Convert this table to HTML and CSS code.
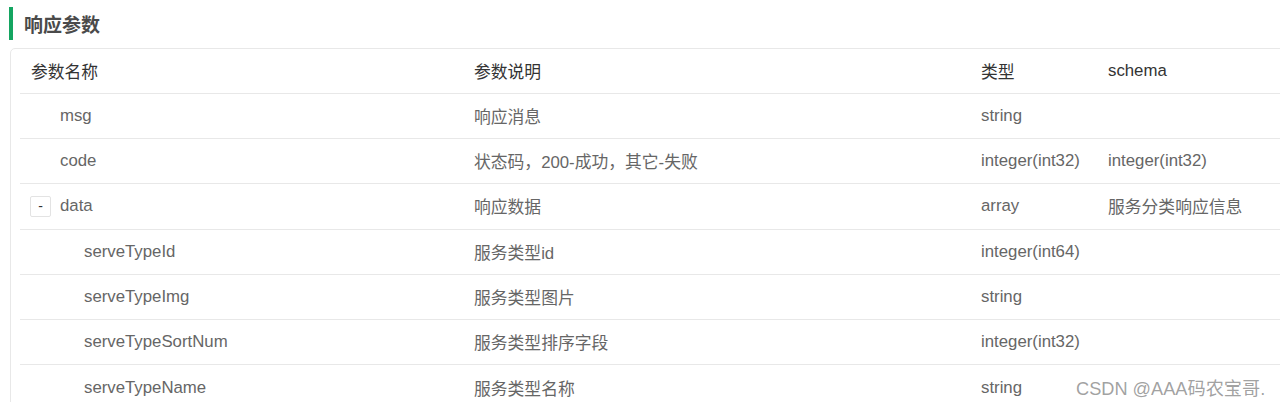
FILE: index.html
```html
<!DOCTYPE html>
<html lang="zh">
<head>
<meta charset="utf-8">
<title>响应参数</title>
<link rel="stylesheet" href="styles.css">
</head>
<body>
<div class="page">
  <h3 class="title">响应参数</h3>
  <div class="card">
    <div class="row head">
      <div class="cell">参数名称</div>
      <div class="cell">参数说明</div>
      <div class="cell">类型</div>
      <div class="cell">schema</div>
    </div>
    <div class="row">
      <div class="cell lvl1">msg</div>
      <div class="cell">响应消息</div>
      <div class="cell">string</div>
      <div class="cell"></div>
    </div>
    <div class="row">
      <div class="cell lvl1">code</div>
      <div class="cell">状态码，200-成功，其它-失败</div>
      <div class="cell">integer(int32)</div>
      <div class="cell">integer(int32)</div>
    </div>
    <div class="row">
      <div class="cell toggle-cell"><span class="toggle">-</span>data</div>
      <div class="cell">响应数据</div>
      <div class="cell">array</div>
      <div class="cell">服务分类响应信息</div>
    </div>
    <div class="row">
      <div class="cell lvl2">serveTypeId</div>
      <div class="cell">服务类型id</div>
      <div class="cell">integer(int64)</div>
      <div class="cell"></div>
    </div>
    <div class="row">
      <div class="cell lvl2">serveTypeImg</div>
      <div class="cell">服务类型图片</div>
      <div class="cell">string</div>
      <div class="cell"></div>
    </div>
    <div class="row">
      <div class="cell lvl2">serveTypeSortNum</div>
      <div class="cell">服务类型排序字段</div>
      <div class="cell">integer(int32)</div>
      <div class="cell"></div>
    </div>
    <div class="row">
      <div class="cell lvl2">serveTypeName</div>
      <div class="cell">服务类型名称</div>
      <div class="cell">string</div>
      <div class="cell"></div>
    </div>
  </div>
  <div class="watermark">CSDN @AAA码农宝哥.</div>
</div>
</body>
</html>
```

FILE: styles.css
```css
html, body {
  margin: 0;
  padding: 0;
  background: #fff;
  overflow: hidden;
}
.page {
  position: relative;
  width: 1280px;
  height: 402px;
  padding: 7px 0 0 9px;
  box-sizing: border-box;
  font-family: "Liberation Sans", "Noto Sans CJK SC", sans-serif;
  font-size: 16.8px;
  color: #666;
}
.title {
  margin: 0;
  height: 33px;
  display: flex;
  align-items: center;
  border-left: 4px solid #14a561;
  padding-left: 11px;
  font-size: 19px;
  font-weight: bold;
  color: #4a4a4a;
  font-family: "Noto Sans CJK SC", sans-serif;
}
.card {
  margin-top: 8px;
  margin-left: 1px;
  width: 1320px;
  border: 1px solid #e8e8e8;
  border-radius: 5px;
  padding-left: 9px;
  box-sizing: border-box;
}
.row {
  display: grid;
  grid-template-columns: 443px 507px 127px 1fr;
  height: 45.2px;
  box-sizing: border-box;
  border-bottom: 1px solid #e8e8e8;
  align-items: center;
}
.row.head {
  height: 45px;
}
.row:last-child {
  border-bottom: none;
}
.cell {
  padding-left: 11px;
  white-space: nowrap;
  display: flex;
  align-items: center;
}
.head .cell {
  color: #333;
}
.lvl1 {
  padding-left: 40px;
}
.lvl2 {
  padding-left: 64px;
}
.toggle-cell {
  padding-left: 10px;
}
.toggle {
  width: 21px;
  height: 21px;
  box-sizing: border-box;
  border: 1px solid #e3e3e3;
  border-radius: 2px;
  display: inline-flex;
  align-items: center;
  justify-content: center;
  font-size: 14px;
  color: #333;
  margin-right: 9px;
}
.watermark {
  position: absolute;
  left: 1076px;
  top: 374px;
  font-size: 18.2px;
  color: rgba(120, 120, 120, 0.7);
  font-family: "Liberation Sans", "Noto Sans CJK SC", sans-serif;
  white-space: nowrap;
}
```
